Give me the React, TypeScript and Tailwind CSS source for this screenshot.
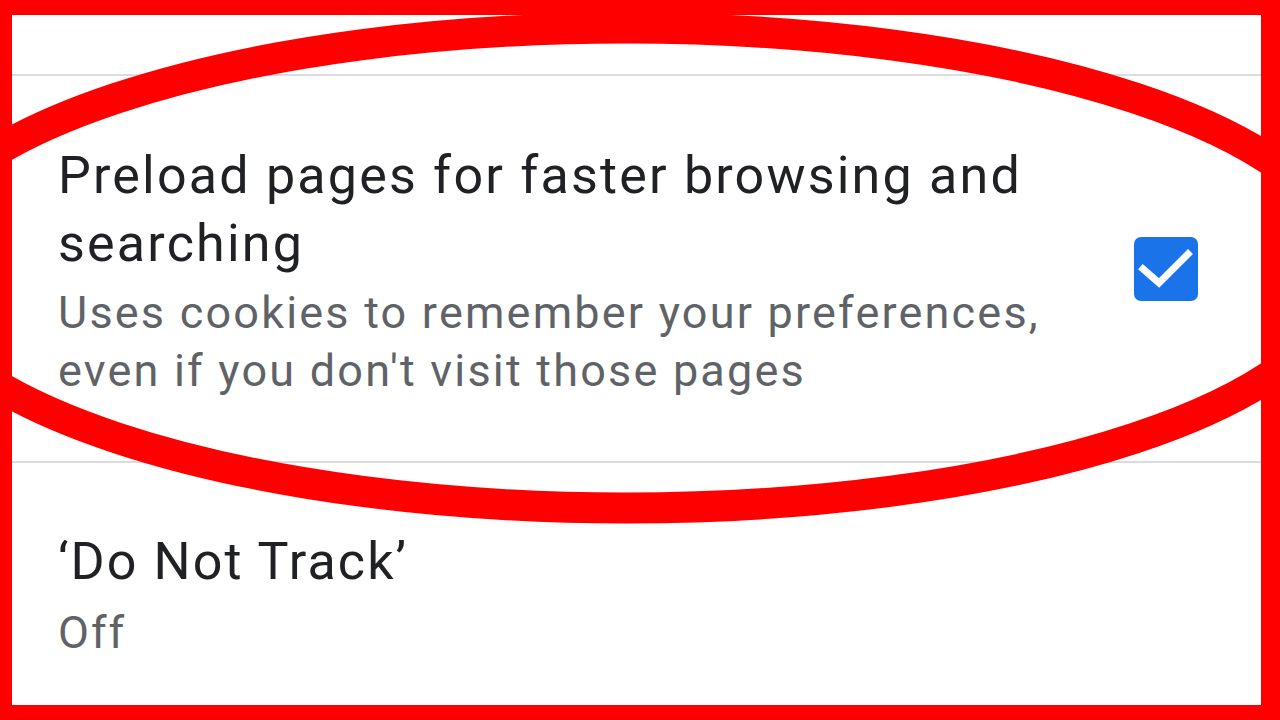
import React from "react";

const font = { fontFamily: "Roboto, 'Noto Sans', Arial, sans-serif" };

export default function App() {
  return (
    <div className="relative w-[1280px] h-[720px] overflow-hidden bg-white" style={font}>
      {/* Frame */}
      <div className="w-full h-full border-solid border-[#ff0000] border-t-[15px] border-l-[12px] border-r-[19px] border-b-[15px] flex flex-col bg-white">
        {/* previous item (cut off) */}
        <div className="h-[59px]" />
        <div className="h-[2px] bg-[#dadce0]" />

        {/* Preload pages */}
        <div className="h-[385px] flex items-center pl-[46px] pr-[63px]">
          <div className="flex-1 pt-[4px]">
            <div className="text-[52px] leading-[68px] tracking-[2.2px] text-[#202124]">
              Preload pages for faster browsing and
              <br />
              searching
            </div>
            <div className="text-[45px] leading-[58px] tracking-[2.2px] text-[#5f6368] mt-[6px]">
              Uses cookies to remember your preferences,
              <br />
              even if you don't visit those pages
            </div>
          </div>
          <div className="w-16 h-16 rounded-[7px] bg-[#1a73e8] flex items-center justify-center shrink-0">
            <svg width="64" height="64" viewBox="0 0 64 64">
              <path d="M9 32 L25 46 L54 17" fill="none" stroke="white" strokeWidth="7" strokeLinecap="square" />
            </svg>
          </div>
        </div>
        <div className="h-[2px] bg-[#dadce0]" />

        {/* Do Not Track */}
        <div className="pl-[46px] pt-[65px]">
          <div className="text-[52px] leading-[68px] tracking-[2.1px] text-[#202124]">‘Do Not Track’</div>
          <div className="text-[45px] leading-[59px] tracking-[2px] text-[#5f6368] mt-[7px]">Off</div>
        </div>
      </div>

      {/* Highlight ring */}
      <svg className="absolute inset-0 pointer-events-none" width="1280" height="720" viewBox="0 0 1280 720">
        <ellipse cx="626" cy="268" rx="721" ry="240" fill="none" stroke="#ff0000" strokeWidth="31" />
      </svg>
    </div>
  );
}
